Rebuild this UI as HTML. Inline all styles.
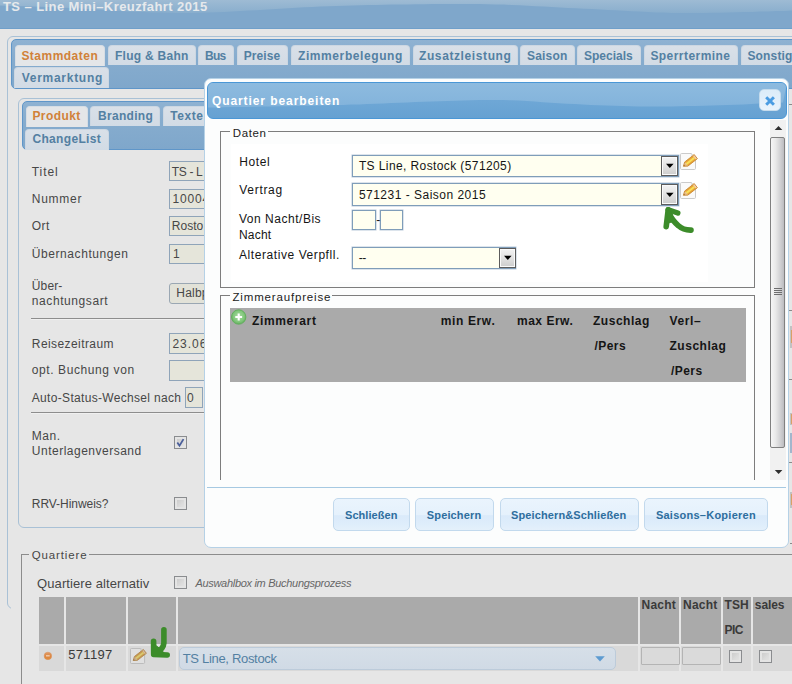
<!DOCTYPE html>
<html>
<head>
<meta charset="utf-8">
<title>TS - Line Mini-Kreuzfahrt 2015</title>
<style>
html,body{margin:0;padding:0;}
body{width:792px;height:684px;overflow:hidden;background:#e6e6e6;font-family:"Liberation Sans",sans-serif;position:relative;}
#root{position:absolute;left:0;top:0;width:792px;height:684px;overflow:hidden;}
.b{position:absolute;box-sizing:border-box;}
.t{position:absolute;white-space:nowrap;line-height:16px;font-family:"Liberation Sans",sans-serif;}
/* page (dimmed by modal overlay) */
.hdr{left:0;top:0;width:792px;height:29px;background:#7fa7cb;border-bottom:1px solid #6f9fca;overflow:hidden;}
.panel{border:1px solid #a9c1d6;border-radius:6px;background:#e6e6e6;}
.tabbar{border:1px solid #5f96c9;border-radius:5px;background:linear-gradient(#8fb2d2 0,#86acce 40%,#7fa7cb 100%);}
.tab{border:1px solid #ccd7e2;border-bottom:none;border-radius:4px 4px 0 0;background:linear-gradient(#d9e0e8,#d2dbe5);}
.tab.act{background:#e4e6e8;border-color:#d6dde4;}
.inp{background:#e5e5da;border:1px solid #8fa4b9;}
.sel{background:#e2e2d8;border:1px solid #9aa7b3;border-radius:3px;}
.hr{height:2px;border-top:1px solid #8d8d8d;border-bottom:1px solid #f0f0f0;}
.cb{width:13px;height:13px;border:1px solid #8a8c8f;background:linear-gradient(135deg,#c6c6c6 0,#dcdcdc 60%,#e6e6e6 100%);box-shadow:inset 0 0 0 2px #e4e4e4;}
.fs{border:1px solid #8c8c8c;}
.th{background:#aaaaaa;}
.td{background:#d9d9d9;}
.dis{background:#dadada;border:1px solid #b4b4b4;border-radius:1px;}
/* dialog */
.dlg{left:204px;top:78px;width:585px;height:470px;background:#fcfdfd;border:1px solid #b5d1e6;border-radius:7px;}
.dtitle{left:207px;top:82px;width:579.5px;height:37px;border:1px solid #4a97d6;border-radius:6px;background:linear-gradient(#74abd8 0,#6da6d5 60%,#66a1d2 100%);overflow:hidden;}
.dclose{left:759px;top:89px;width:22px;height:22px;border:1px solid #c5dbec;border-radius:5px;background:linear-gradient(#dcecf9 0,#e2effb 50%,#e9f3fc 100%);}
.dfs{border:1px solid #7d7d7d;}
.dsel{background:#fffff0;border:1px solid #7f9db9;box-shadow:0 0 0 0.5px rgba(127,157,185,.55);}
.dbtn{background:linear-gradient(#f3f3f3 0,#e4e4e4 45%,#cdcdcd 100%);border:1px solid #5c5c5c;box-shadow:inset 0 0 0 1px #fafafa;}
.btn{top:498px;height:33px;border:1px solid #c2d9ed;border-radius:5px;background:linear-gradient(#eaf4fd 0,#e5f1fc 50%,#daeafa 54%,#deedfb 80%,#e4f0fb 100%);}
</style>
</head>
<body>
<div id="root">

<!-- ======================= PAGE ======================= -->
<div class="b hdr"><svg class="b" style="left:0;top:0;" width="792" height="28" viewBox="0 0 792 28"><defs><linearGradient id="hg" x1="0" y1="0" x2="0" y2="1"><stop offset="0" stop-color="#9ebbd4"/><stop offset="1" stop-color="#89aecd"/></linearGradient></defs><path d="M0 0 H792 L792 10.6 L784 10.9 L776 11.1 L768 11.4 L760 11.6 L752 11.9 L744 12.1 L736 12.3 L728 12.5 L720 12.7 L712 12.8 L704 12.9 L696 13.0 L688 13.0 L680 13.0 L672 12.9 L664 12.6 L656 12.4 L648 12.0 L640 11.6 L632 11.2 L624 10.8 L616 10.3 L608 9.9 L600 9.5 L592 9.1 L584 8.7 L576 8.3 L568 7.9 L560 7.5 L552 7.1 L544 6.6 L536 6.2 L528 5.8 L520 5.3 L512 5.0 L504 4.6 L496 4.4 L488 4.2 L480 4.1 L472 4.0 L464 3.9 L456 3.9 L448 3.9 L440 4.0 L432 4.1 L424 4.2 L416 4.3 L408 4.4 L400 4.5 L392 4.6 L384 4.8 L376 4.9 L368 5.1 L360 5.3 L352 5.5 L344 5.7 L336 6.0 L328 6.3 L320 6.6 L312 6.9 L304 7.3 L296 7.7 L288 8.2 L280 8.7 L272 9.2 L264 9.7 L256 10.2 L248 10.6 L240 11.0 L232 11.5 L224 11.9 L216 12.3 L208 12.6 L200 12.8 L192 13.0 L184 13.0 L176 13.0 L168 12.8 L160 12.6 L152 12.4 L144 12.1 L136 11.7 L128 11.4 L120 11.0 L112 10.6 L104 10.1 L96 9.6 L88 9.1 L80 8.6 L72 8.1 L64 7.7 L56 7.3 L48 7.0 L40 6.7 L32 6.5 L24 6.2 L16 6.0 L8 5.8 L0 5.5 Z" fill="url(#hg)"/></svg></div>

<!-- outer tab panel -->
<div class="b panel" style="left:7px;top:36px;width:900px;height:573px;"></div>
<div class="b tabbar" style="left:11px;top:39px;width:900px;height:50px;"></div>
<div class="b tab act" style="left:15px;top:45px;width:89.5px;height:21px;"></div>
<div class="b tab" style="left:108px;top:45px;width:87.5px;height:20px;"></div>
<div class="b tab" style="left:198px;top:45px;width:35.5px;height:20px;"></div>
<div class="b tab" style="left:237px;top:45px;width:51px;height:20px;"></div>
<div class="b tab" style="left:291px;top:45px;width:119px;height:20px;"></div>
<div class="b tab" style="left:412.5px;top:45px;width:105px;height:20px;"></div>
<div class="b tab" style="left:520px;top:45px;width:54.5px;height:20px;"></div>
<div class="b tab" style="left:577px;top:45px;width:63.5px;height:20px;"></div>
<div class="b tab" style="left:643.5px;top:45px;width:94.5px;height:20px;"></div>
<div class="b tab" style="left:740.5px;top:45px;width:73px;height:20px;"></div>
<div class="b tab" style="left:14px;top:67px;width:95px;height:21px;"></div>

<!-- inner tab panel -->
<div class="b panel" style="left:18px;top:98px;width:560px;height:430px;"></div>
<div class="b tabbar" style="left:22px;top:101px;width:552px;height:49px;"></div>
<div class="b tab act" style="left:26px;top:106px;width:61.5px;height:21px;"></div>
<div class="b tab" style="left:90px;top:106px;width:70px;height:20px;"></div>
<div class="b tab" style="left:162.5px;top:106px;width:48px;height:20px;"></div>
<div class="b tab" style="left:25px;top:128.5px;width:83.5px;height:21px;"></div>

<!-- form fields -->
<div class="b inp" style="left:168.5px;top:161px;width:150px;height:20px;"></div>
<div class="b inp" style="left:168.5px;top:188.5px;width:150px;height:20px;"></div>
<div class="b inp" style="left:168.5px;top:216px;width:150px;height:20px;"></div>
<div class="b inp" style="left:168.5px;top:244px;width:150px;height:20px;"></div>
<div class="b sel" style="left:168.5px;top:282.5px;width:150px;height:21.5px;"></div>
<div class="b hr" style="left:30.5px;top:317.5px;width:300px;"></div>
<div class="b inp" style="left:168.5px;top:333px;width:150px;height:20.5px;"></div>
<div class="b inp" style="left:168.5px;top:360px;width:150px;height:20.5px;"></div>
<div class="b inp" style="left:184.5px;top:387px;width:18.5px;height:21px;"></div>
<div class="b hr" style="left:30.5px;top:411.5px;width:300px;"></div>
<div class="b cb" style="left:174px;top:436px;"></div>
<svg class="b" style="left:174px;top:436px;" width="13" height="13" viewBox="0 0 13 13"><path d="M3.3 6.6 L5.5 9.7 L9.5 3.1" fill="none" stroke="#4b5f9b" stroke-width="1.8" stroke-linecap="butt"/></svg>
<div class="b cb" style="left:174px;top:497px;"></div>

<!-- Quartiere -->
<div class="b" style="left:11px;top:548px;width:800px;height:140px;background:#e6e6e6;"></div>
<div class="b fs" style="left:21px;top:554px;width:900px;height:200px;"></div>
<div class="b" style="left:29px;top:550px;width:60px;height:10px;background:#e6e6e6;"></div>
<div class="b cb" style="left:174px;top:576px;"></div>
<!-- table -->
<div class="b th" style="left:38.5px;top:597px;width:25.5px;height:46.5px;"></div>
<div class="b th" style="left:66px;top:597px;width:60px;height:46.5px;"></div>
<div class="b th" style="left:128px;top:597px;width:48px;height:46.5px;"></div>
<div class="b th" style="left:178.3px;top:597px;width:459.3px;height:46.5px;"></div>
<div class="b th" style="left:640px;top:597px;width:39px;height:46.5px;"></div>
<div class="b th" style="left:681.2px;top:597px;width:39.8px;height:46.5px;"></div>
<div class="b th" style="left:723.2px;top:597px;width:27.6px;height:46.5px;"></div>
<div class="b th" style="left:753.2px;top:597px;width:60px;height:46.5px;"></div>
<div class="b td" style="left:38.5px;top:645.7px;width:25.5px;height:25px;"></div>
<div class="b td" style="left:66px;top:645.7px;width:60px;height:25px;"></div>
<div class="b td" style="left:128px;top:645.7px;width:48px;height:25px;"></div>
<div class="b td" style="left:178.3px;top:645.7px;width:459.3px;height:25px;"></div>
<div class="b td" style="left:640px;top:645.7px;width:39px;height:25px;"></div>
<div class="b td" style="left:681.2px;top:645.7px;width:39.8px;height:25px;"></div>
<div class="b td" style="left:723.2px;top:645.7px;width:27.6px;height:25px;"></div>
<div class="b td" style="left:753.2px;top:645.7px;width:60px;height:25px;"></div>
<!-- orange bullet -->
<svg class="b" style="left:42px;top:650px;" width="12" height="12" viewBox="0 0 12 12"><defs><linearGradient id="ob" x1="0" y1="0" x2="0" y2="1"><stop offset="0" stop-color="#e09a66"/><stop offset=".55" stop-color="#dc8641"/><stop offset="1" stop-color="#e08c3a"/></linearGradient></defs><circle cx="5.9" cy="5.9" r="3.75" fill="url(#ob)" stroke="#d9905a" stroke-width=".5"/><path d="M4 5.8 H7.7" stroke="#f0cdb0" stroke-width="1.4"/></svg>
<!-- pencil icon (dimmed) -->
<svg class="b" style="left:130px;top:647.5px;opacity:.93;filter:brightness(.9) saturate(.8);" width="17.9" height="16" viewBox="0 0 19 17" preserveAspectRatio="none"><path d="M0.5 1.6 Q0.5 0.5 1.6 0.5 H11.4 L15.5 4.6 V15.4 Q15.5 16.5 14.4 16.5 H1.6 Q0.5 16.5 0.5 15.4 Z" fill="#fafafa" stroke="#cbcbcb" stroke-width="1"/><path d="M11.4 0.5 V4.6 H15.5" fill="#ececec" stroke="#d6d6d6" stroke-width=".7"/><path d="M4.64 9.04 L14.2 1.55 L17.4 5.65 L7.84 13.14 Z" fill="#e8a238"/><path d="M5.63 10.3 L13.77 3.92 L15 5.5 L6.86 11.88 Z" fill="#f7df58"/><path d="M3.4 13.3 L4.64 9.04 L7.84 13.14 Z" fill="#e6b988"/><path d="M3.4 13.3 L3.9 11.7 L5.1 13.1 Z" fill="#8a5a1e"/><path d="M12.78 2.66 L14.2 1.55 L17.4 5.65 L15.98 6.76 Z" fill="#f3cba8"/><path d="M3.4 13.3 L4.64 9.04 L14.2 1.55 L17.4 5.65 L7.84 13.14 Z" fill="none" stroke="#c4842a" stroke-width=".8" stroke-linejoin="round"/></svg>
<!-- green arrow #1 (bottom-left) -->
<svg class="b" style="left:145px;top:622px;" width="34" height="42" viewBox="145 622 34 42"><g fill="none" stroke="#3c8c2a" stroke-linecap="round" stroke-linejoin="round">
<path d="M163.9 629.7 L163.9 643 C163.5 648 160 651 155.5 653" stroke-width="5.6"/>
<path d="M153.6 641.3 L153.7 654.4 L167.2 655" stroke-width="5.6"/>
<path d="M153.7 644 L162 650 L164.5 654.6 L153.7 654.4 Z" fill="#3c8c2a" stroke-width="1"/></g>
</svg>
<!-- combobox -->
<div class="b" style="left:179px;top:647px;width:436.6px;height:22.5px;border:1px solid #bccbda;border-radius:5px;background:linear-gradient(#d6dfe8,#d0dae5);"></div>
<svg class="b" style="left:594px;top:655px;" width="12" height="8" viewBox="0 0 12 8"><path d="M1.2 1.2 H10.8 L6 6.6 Z" fill="#5d9bd1"/></svg>
<div class="b dis" style="left:641px;top:647px;width:38.6px;height:17.6px;"></div>
<div class="b dis" style="left:682.2px;top:647px;width:39.2px;height:17.6px;"></div>
<div class="b cb" style="left:729px;top:650px;"></div>
<div class="b cb" style="left:759px;top:650px;"></div>

<!-- right strip peeking past dialog -->
<div class="b" style="left:789px;top:104px;width:4px;height:1px;background:#8a8a8a;"></div>
<div class="b" style="left:789px;top:310px;width:4px;height:1px;background:#8a8a8a;"></div>
<div class="b" style="left:789.5px;top:326px;width:4px;height:21.5px;background:#c2c2c2;"></div>
<div class="b" style="left:790.7px;top:330px;width:2px;height:13px;background:#d9a066;"></div>
<div class="b" style="left:789px;top:378.5px;width:4px;height:1px;background:#8a8a8a;"></div>
<div class="b" style="left:789.5px;top:412.5px;width:4px;height:12.5px;background:#c2c2c2;"></div>
<div class="b" style="left:790.7px;top:414px;width:2px;height:10px;background:#d9a066;"></div>
<div class="b" style="left:789.5px;top:433px;width:4px;height:19.5px;background:#a3b6cc;"></div>
<div class="b" style="left:789px;top:462px;width:4px;height:1px;background:#8a8a8a;"></div>
<div class="b" style="left:789.5px;top:491.5px;width:4px;height:16.5px;background:#c2c2c2;"></div>
<div class="b" style="left:790.7px;top:494px;width:2px;height:11px;background:#d9a066;"></div>
<div class="b" style="left:789.5px;top:543px;width:4px;height:1px;background:#8a8a8a;"></div>
<span class="t" style="left:3.00px;top:-2px;line-height:17px;font-size:13px;color:#e6e9ec;font-weight:bold;letter-spacing:0.416px;">TS – Line Mini–Kreuzfahrt 2015</span>
<span class="t" style="left:21.40px;top:48px;line-height:16px;font-size:12px;color:#d18139;font-weight:bold;letter-spacing:0.479px;">Stammdaten</span>
<span class="t" style="left:115.00px;top:48px;line-height:16px;font-size:12px;color:#5380a2;font-weight:bold;letter-spacing:0.267px;">Flug &amp; Bahn</span>
<span class="t" style="left:205.00px;top:48px;line-height:16px;font-size:12px;color:#5380a2;font-weight:bold;letter-spacing:-0.698px;">Bus</span>
<span class="t" style="left:243.80px;top:48px;line-height:16px;font-size:12px;color:#5380a2;font-weight:bold;letter-spacing:0.049px;">Preise</span>
<span class="t" style="left:298.00px;top:48px;line-height:16px;font-size:12px;color:#5380a2;font-weight:bold;letter-spacing:0.588px;">Zimmerbelegung</span>
<span class="t" style="left:419.00px;top:48px;line-height:16px;font-size:12px;color:#5380a2;font-weight:bold;letter-spacing:0.602px;">Zusatzleistung</span>
<span class="t" style="left:527.00px;top:48px;line-height:16px;font-size:12px;color:#5380a2;font-weight:bold;letter-spacing:0.197px;">Saison</span>
<span class="t" style="left:584.00px;top:48px;line-height:16px;font-size:12px;color:#5380a2;font-weight:bold;">Specials</span>
<span class="t" style="left:650.40px;top:48px;line-height:16px;font-size:12px;color:#5380a2;font-weight:bold;letter-spacing:0.444px;">Sperrtermine</span>
<span class="t" style="left:747.40px;top:48px;line-height:16px;font-size:12px;color:#5380a2;font-weight:bold;letter-spacing:0.166px;">Sonstiges</span>
<span class="t" style="left:21.70px;top:70px;line-height:16px;font-size:12px;color:#5380a2;font-weight:bold;letter-spacing:0.727px;">Vermarktung</span>
<span class="t" style="left:32.40px;top:108px;line-height:16px;font-size:12px;color:#d18139;font-weight:bold;letter-spacing:0.427px;">Produkt</span>
<span class="t" style="left:98.10px;top:108px;line-height:16px;font-size:12px;color:#5380a2;font-weight:bold;letter-spacing:0.295px;">Branding</span>
<span class="t" style="left:170.20px;top:108px;line-height:16px;font-size:12px;color:#5380a2;font-weight:bold;letter-spacing:0.554px;">Texte</span>
<span class="t" style="left:32.40px;top:131px;line-height:16px;font-size:12px;color:#5380a2;font-weight:bold;letter-spacing:0.340px;">ChangeList</span>
<span class="t" style="left:31.80px;top:164px;line-height:16px;font-size:12px;color:#474747;letter-spacing:0.910px;">Titel</span>
<span class="t" style="left:31.80px;top:191px;line-height:16px;font-size:12px;color:#474747;letter-spacing:0.719px;">Nummer</span>
<span class="t" style="left:31.80px;top:218px;line-height:16px;font-size:12px;color:#474747;letter-spacing:0.385px;">Ort</span>
<span class="t" style="left:31.80px;top:246px;line-height:16px;font-size:12px;color:#474747;letter-spacing:0.572px;">Übernachtungen</span>
<span class="t" style="left:31.80px;top:278px;line-height:16px;font-size:12px;color:#474747;letter-spacing:0.123px;">Über-</span>
<span class="t" style="left:31.80px;top:293px;line-height:16px;font-size:12px;color:#474747;letter-spacing:0.578px;">nachtungsart</span>
<span class="t" style="left:31.80px;top:336px;line-height:16px;font-size:12px;color:#474747;letter-spacing:0.417px;">Reisezeitraum</span>
<span class="t" style="left:31.80px;top:362px;line-height:16px;font-size:12px;color:#474747;letter-spacing:0.591px;">opt. Buchung von</span>
<span class="t" style="left:31.80px;top:390px;line-height:16px;font-size:12px;color:#474747;letter-spacing:0.318px;">Auto-Status-Wechsel nach</span>
<span class="t" style="left:31.80px;top:428px;line-height:16px;font-size:12px;color:#474747;letter-spacing:0.519px;">Man.</span>
<span class="t" style="left:31.80px;top:443px;line-height:16px;font-size:12px;color:#474747;letter-spacing:0.499px;">Unterlagenversand</span>
<span class="t" style="left:31.80px;top:496px;line-height:16px;font-size:12px;color:#474747;letter-spacing:-0.051px;">RRV-Hinweis?</span>
<span class="t" style="left:171.80px;top:164px;line-height:16px;font-size:12px;color:#474747;letter-spacing:-0.340px;">TS - L</span>
<span class="t" style="left:172.40px;top:191px;line-height:16px;font-size:12px;color:#474747;letter-spacing:0.826px;">10004</span>
<span class="t" style="left:171.80px;top:218px;line-height:16px;font-size:12px;color:#474747;letter-spacing:0.007px;">Rosto</span>
<span class="t" style="left:173.00px;top:246px;line-height:16px;font-size:12px;color:#474747;">1</span>
<span class="t" style="left:176.30px;top:285px;line-height:16px;font-size:12px;color:#474747;letter-spacing:0.205px;">Halbp</span>
<span class="t" style="left:172.40px;top:336px;line-height:16px;font-size:12px;color:#474747;letter-spacing:1.011px;">23.06</span>
<span class="t" style="left:187.00px;top:390px;line-height:16px;font-size:12px;color:#474747;">0</span>
<span class="t" style="left:31.80px;top:548px;line-height:14px;font-size:11.5px;color:#474747;letter-spacing:0.857px;">Quartiere</span>
<span class="t" style="left:37.10px;top:575px;line-height:17px;font-size:13px;color:#474747;letter-spacing:0.087px;">Quartiere alternativ</span>
<span class="t" style="left:195.40px;top:576px;line-height:14px;font-size:11px;color:#666;font-style:italic;letter-spacing:-0.299px;">Auswahlbox im Buchungsprozess</span>
<span class="t" style="left:68.30px;top:646px;line-height:17px;font-size:13px;color:#3a3a3a;letter-spacing:0.303px;">571197</span>
<span class="t" style="left:182.70px;top:650px;line-height:17px;font-size:13px;color:#5380a2;letter-spacing:-0.312px;">TS Line, Rostock</span>
<span class="t" style="left:641.60px;top:597px;line-height:16px;font-size:12px;color:#3a3a3a;font-weight:bold;letter-spacing:0.214px;">Nacht</span>
<span class="t" style="left:683.00px;top:597px;line-height:16px;font-size:12px;color:#3a3a3a;font-weight:bold;letter-spacing:0.239px;">Nacht</span>
<span class="t" style="left:724.50px;top:597px;line-height:16px;font-size:12px;color:#3a3a3a;font-weight:bold;letter-spacing:0.083px;">TSH</span>
<span class="t" style="left:724.50px;top:622px;line-height:16px;font-size:12px;color:#3a3a3a;font-weight:bold;letter-spacing:-0.519px;">PIC</span>
<span class="t" style="left:754.80px;top:597px;line-height:16px;font-size:12px;color:#3a3a3a;font-weight:bold;letter-spacing:-0.089px;">sales</span>

<!-- ======================= DIALOG ======================= -->
<div class="b dlg"></div>
<div class="b dtitle"><svg class="b" style="left:-1px;top:-1px;" width="580" height="37" viewBox="207 82 580 37"><defs><linearGradient id="tg" x1="0" y1="0" x2="0" y2="1"><stop offset="0" stop-color="#8ebbdf"/><stop offset="1" stop-color="#82b3db"/></linearGradient></defs><path d="M207 82 H787 L783 102.5 L775 102.9 L767 103.2 L759 103.6 L751 104.0 L743 104.4 L735 104.7 L727 105.0 L719 105.3 L711 105.5 L703 105.8 L695 106.0 L687 106.1 L679 106.3 L671 106.4 L663 106.4 L655 106.5 L647 106.4 L639 106.4 L631 106.2 L623 106.0 L615 105.8 L607 105.5 L599 105.2 L591 104.9 L583 104.5 L575 104.1 L567 103.8 L559 103.3 L551 102.8 L543 102.2 L535 101.6 L527 101.1 L519 100.6 L511 100.2 L503 100.0 L495 99.9 L487 99.9 L479 100.0 L471 100.2 L463 100.4 L455 100.7 L447 101.0 L439 101.2 L431 101.5 L423 101.8 L415 102.1 L407 102.4 L399 102.7 L391 103.1 L383 103.4 L375 103.8 L367 104.1 L359 104.4 L351 104.6 L343 104.9 L335 105.1 L327 105.3 L319 105.5 L311 105.7 L303 105.8 L295 106.0 L287 106.2 L279 106.3 L271 106.5 L263 106.6 L255 106.8 L247 106.9 L239 107.0 L231 107.1 L223 107.2 L215 107.4 L207 107.5 Z" fill="url(#tg)"/></svg></div>
<div class="b dclose"></div>
<svg class="b" style="left:764px;top:95px;" width="12" height="12" viewBox="0 0 12 12"><path d="M2.2 2.3 L9.9 9.8 M9.9 2.3 L2.2 9.8" stroke="#4b9ce2" stroke-width="3" stroke-linecap="butt" fill="none"/></svg>

<!-- scrollbar -->
<div class="b" style="left:770px;top:119.5px;width:15.5px;height:360px;background:#f1f1f1;"></div>
<svg class="b" style="left:774px;top:125px;" width="9" height="6" viewBox="0 0 9 6"><path d="M0.7 5 L4.5 0.9 L8.3 5 Z" fill="#2e2e2e"/></svg>
<div class="b" style="left:770px;top:137px;width:15px;height:311px;border:1px solid #808080;border-radius:2px;background:linear-gradient(90deg,#f6f6f6 0,#e9e9e9 35%,#d2d2d4 70%,#bcbcc0 100%);"></div>
<div class="b" style="left:774px;top:288px;width:8px;height:1px;background:#6e6e6e;box-shadow:0 2px 0 #6e6e6e,0 4px 0 #6e6e6e,0 6px 0 #6e6e6e;"></div>
<svg class="b" style="left:774px;top:469px;" width="9" height="6" viewBox="0 0 9 6"><path d="M0.8 1 L8.4 1 L4.6 5 Z" fill="#2e2e2e"/></svg>

<!-- fieldset Daten -->
<div class="b dfs" style="left:220px;top:131px;width:535px;height:157px;"></div>
<div class="b" style="left:230px;top:126px;width:38px;height:10px;background:#fcfdfd;"></div>
<div class="b" style="left:231px;top:144px;width:477px;height:138px;background:#ffffff;"></div>
<!-- selects -->
<div class="b dsel" style="left:352px;top:155px;width:326.5px;height:21.5px;"></div>
<div class="b dbtn" style="left:661px;top:156px;width:17px;height:19.5px;"></div>
<svg class="b" style="left:665px;top:163px;" width="10" height="6" viewBox="0 0 10 6"><path d="M1 0.7 H8.6 L4.8 5 Z" fill="#000"/></svg>
<div class="b dsel" style="left:352px;top:183px;width:326.5px;height:22.5px;"></div>
<div class="b dbtn" style="left:661px;top:184px;width:17px;height:20.5px;"></div>
<svg class="b" style="left:665px;top:192px;" width="10" height="6" viewBox="0 0 10 6"><path d="M1 0.7 H8.6 L4.8 5 Z" fill="#000"/></svg>
<div class="b dsel" style="left:352px;top:210px;width:23.5px;height:19.5px;"></div>
<div class="b dsel" style="left:380px;top:210px;width:23px;height:19.5px;"></div>
<div class="b dsel" style="left:352px;top:246.5px;width:164px;height:22px;"></div>
<div class="b dbtn" style="left:498.5px;top:247.5px;width:17px;height:20px;"></div>
<svg class="b" style="left:502.5px;top:255px;" width="10" height="6" viewBox="0 0 10 6"><path d="M1 0.7 H8.6 L4.8 5 Z" fill="#000"/></svg>
<!-- pencil icons -->
<svg class="b" style="left:680px;top:153px;" width="19" height="17" viewBox="0 0 19 17" preserveAspectRatio="none"><path d="M0.5 1.6 Q0.5 0.5 1.6 0.5 H11.4 L15.5 4.6 V15.4 Q15.5 16.5 14.4 16.5 H1.6 Q0.5 16.5 0.5 15.4 Z" fill="#fafafa" stroke="#cbcbcb" stroke-width="1"/><path d="M11.4 0.5 V4.6 H15.5" fill="#ececec" stroke="#d6d6d6" stroke-width=".7"/><path d="M4.64 9.04 L14.2 1.55 L17.4 5.65 L7.84 13.14 Z" fill="#e8a238"/><path d="M5.63 10.3 L13.77 3.92 L15 5.5 L6.86 11.88 Z" fill="#f7df58"/><path d="M3.4 13.3 L4.64 9.04 L7.84 13.14 Z" fill="#e6b988"/><path d="M3.4 13.3 L3.9 11.7 L5.1 13.1 Z" fill="#8a5a1e"/><path d="M12.78 2.66 L14.2 1.55 L17.4 5.65 L15.98 6.76 Z" fill="#f3cba8"/><path d="M3.4 13.3 L4.64 9.04 L14.2 1.55 L17.4 5.65 L7.84 13.14 Z" fill="none" stroke="#c4842a" stroke-width=".8" stroke-linejoin="round"/></svg>
<svg class="b" style="left:680px;top:182px;" width="19" height="17" viewBox="0 0 19 17" preserveAspectRatio="none"><path d="M0.5 1.6 Q0.5 0.5 1.6 0.5 H11.4 L15.5 4.6 V15.4 Q15.5 16.5 14.4 16.5 H1.6 Q0.5 16.5 0.5 15.4 Z" fill="#fafafa" stroke="#cbcbcb" stroke-width="1"/><path d="M11.4 0.5 V4.6 H15.5" fill="#ececec" stroke="#d6d6d6" stroke-width=".7"/><path d="M4.64 9.04 L14.2 1.55 L17.4 5.65 L7.84 13.14 Z" fill="#e8a238"/><path d="M5.63 10.3 L13.77 3.92 L15 5.5 L6.86 11.88 Z" fill="#f7df58"/><path d="M3.4 13.3 L4.64 9.04 L7.84 13.14 Z" fill="#e6b988"/><path d="M3.4 13.3 L3.9 11.7 L5.1 13.1 Z" fill="#8a5a1e"/><path d="M12.78 2.66 L14.2 1.55 L17.4 5.65 L15.98 6.76 Z" fill="#f3cba8"/><path d="M3.4 13.3 L4.64 9.04 L14.2 1.55 L17.4 5.65 L7.84 13.14 Z" fill="none" stroke="#c4842a" stroke-width=".8" stroke-linejoin="round"/></svg>
<!-- green arrow #2 -->
<svg class="b" style="left:655px;top:198px;" width="48" height="42" viewBox="655 198 48 42"><g fill="none" stroke="#3c8c2a" stroke-linecap="round" stroke-linejoin="round">
<path d="M668.2 209.7 L666.2 226.7" stroke-width="5.6"/>
<path d="M668.2 209.7 L677.8 213" stroke-width="5.4"/>
<path d="M669 213.5 C671 218 674.5 222.3 678.5 225.8 C681.5 228.6 685.5 230.2 691 230.1" stroke-width="5.6"/>
<path d="M667.8 210.5 L672.5 214.5 L673 221.5 L667 223.5 Z" fill="#3c8c2a" stroke-width="1"/></g>
</svg>

<!-- fieldset Zimmeraufpreise -->
<div class="b dfs" style="left:220px;top:295px;width:535px;height:201px;clip-path:inset(-10px -2px 16px -2px);"></div>
<div class="b" style="left:230px;top:290px;width:102px;height:10px;background:#fcfdfd;"></div>
<div class="b" style="left:230px;top:308px;width:516px;height:74px;background:#aaaaaa;"></div>
<!-- add icon -->
<svg class="b" style="left:231px;top:309px;" width="16" height="16" viewBox="0 0 16 16"><defs><radialGradient id="gg" cx="50%" cy="45%" r="60%"><stop offset="0" stop-color="#a9dca3"/><stop offset=".65" stop-color="#80c67a"/><stop offset="1" stop-color="#58a653"/></radialGradient></defs>
<circle cx="7.7" cy="8" r="7.2" fill="url(#gg)" stroke="#5fae5a" stroke-width=".9"/>
<path d="M7.7 4.6 V11.4 M4.3 8 H11.1" stroke="#ffffff" stroke-width="2.1" fill="none"/></svg>

<!-- button pane (mask + border) -->
<div class="b" style="left:205px;top:480px;width:583px;height:66px;background:#fcfdfd;border-radius:0 0 6px 6px;"></div>
<div class="b" style="left:207px;top:487px;width:579px;height:1px;background:#a6c9e2;"></div>
<div class="b btn" style="left:333.3px;width:76.5px;"></div>
<div class="b btn" style="left:415px;width:78.6px;"></div>
<div class="b btn" style="left:499.5px;width:139.2px;"></div>
<div class="b btn" style="left:644.4px;width:123.3px;"></div>

<span class="t" style="left:211.90px;top:93px;line-height:16px;font-size:12px;color:#ffffff;font-weight:bold;letter-spacing:0.924px;">Quartier bearbeiten</span>
<span class="t" style="left:232.70px;top:126px;line-height:14px;font-size:11.5px;color:#222;letter-spacing:0.652px;">Daten</span>
<span class="t" style="left:239.30px;top:154px;line-height:16px;font-size:12px;color:#151515;letter-spacing:0.563px;">Hotel</span>
<span class="t" style="left:239.30px;top:182px;line-height:16px;font-size:12px;color:#151515;letter-spacing:0.697px;">Vertrag</span>
<span class="t" style="left:239.00px;top:211px;line-height:16px;font-size:12px;color:#151515;letter-spacing:0.519px;">Von Nacht/Bis</span>
<span class="t" style="left:239.00px;top:227px;line-height:16px;font-size:12px;color:#151515;letter-spacing:0.197px;">Nacht</span>
<span class="t" style="left:239.00px;top:247px;line-height:16px;font-size:12px;color:#151515;letter-spacing:0.572px;">Alterative Verpfll.</span>
<span class="t" style="left:358.90px;top:158px;line-height:16px;font-size:12px;color:#151515;letter-spacing:0.398px;">TS Line, Rostock (571205)</span>
<span class="t" style="left:358.90px;top:187px;line-height:16px;font-size:12px;color:#151515;letter-spacing:0.487px;">571231 - Saison 2015</span>
<span class="t" style="left:376.20px;top:212px;line-height:16px;font-size:12px;color:#151515;">-</span>
<span class="t" style="left:358.80px;top:250px;line-height:16px;font-size:12px;color:#151515;letter-spacing:-0.596px;">--</span>
<span class="t" style="left:232.50px;top:290px;line-height:14px;font-size:11.5px;color:#222;letter-spacing:0.830px;">Zimmeraufpreise</span>
<span class="t" style="left:251.90px;top:313px;line-height:16px;font-size:12px;color:#151515;font-weight:bold;letter-spacing:0.664px;">Zimmerart</span>
<span class="t" style="left:440.70px;top:313px;line-height:16px;font-size:12px;color:#151515;font-weight:bold;letter-spacing:0.639px;">min Erw.</span>
<span class="t" style="left:517.00px;top:313px;line-height:16px;font-size:12px;color:#151515;font-weight:bold;letter-spacing:0.512px;">max Erw.</span>
<span class="t" style="left:593.00px;top:313px;line-height:16px;font-size:12px;color:#151515;font-weight:bold;letter-spacing:0.522px;">Zuschlag</span>
<span class="t" style="left:594.40px;top:338px;line-height:16px;font-size:12px;color:#151515;font-weight:bold;letter-spacing:0.480px;">/Pers</span>
<span class="t" style="left:669.50px;top:313px;line-height:16px;font-size:12px;color:#151515;font-weight:bold;letter-spacing:0.620px;">Verl–</span>
<span class="t" style="left:669.50px;top:338px;line-height:16px;font-size:12px;color:#151515;font-weight:bold;letter-spacing:0.522px;">Zuschlag</span>
<span class="t" style="left:670.90px;top:363px;line-height:16px;font-size:12px;color:#151515;font-weight:bold;letter-spacing:0.480px;">/Pers</span>
<span class="t" style="left:345.00px;top:508px;line-height:14px;font-size:11px;color:#2e6e9e;font-weight:bold;letter-spacing:0.057px;">Schließen</span>
<span class="t" style="left:426.80px;top:508px;line-height:14px;font-size:11px;color:#2e6e9e;font-weight:bold;letter-spacing:0.142px;">Speichern</span>
<span class="t" style="left:511.00px;top:508px;line-height:14px;font-size:11px;color:#2e6e9e;font-weight:bold;letter-spacing:0.118px;">Speichern&amp;Schließen</span>
<span class="t" style="left:655.90px;top:508px;line-height:14px;font-size:11px;color:#2e6e9e;font-weight:bold;letter-spacing:0.250px;">Saisons–Kopieren</span>
</div>
</body>
</html>
